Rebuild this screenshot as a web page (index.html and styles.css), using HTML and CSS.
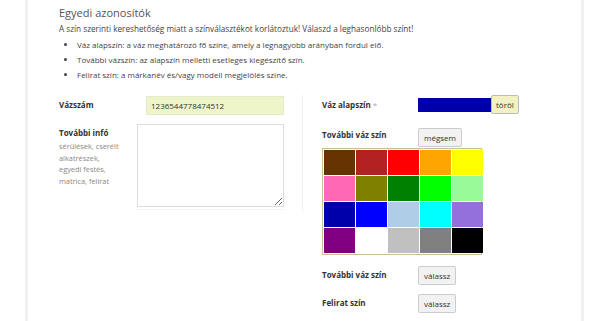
FILE: index.html
```html
<!DOCTYPE html>
<html lang="hu">
<head>
  <meta charset="UTF-8">
  <title>Egyedi azonosítók</title>
  <link rel="stylesheet" href="styles.css">
</head>
<body>
<div class="panel">
  <h2 class="title">Egyedi azonosítók</h2>
  <p class="intro">A szín szerinti kereshetőség miatt a színválasztékot korlátoztuk! Válaszd a leghasonlóbb színt!</p>
  <ul class="hints">
    <li>Váz alapszín: a váz meghatározó fő színe, amely a legnagyobb arányban fordul elő.</li>
    <li>További vázszín: az alapszín melletti esetleges kiegészítő szín.</li>
    <li>Felirat szín: a márkanév és/vagy modell megjelölés színe.</li>
  </ul>

  <div class="columns">
    <div class="col-left">
      <div class="row">
        <label class="label label-num" for="vazszam">Vázszám</label>
        <input type="text" id="vazszam" class="num-input" value="1236544778474512">
      </div>
      <div class="row">
        <div class="label-info">
          <label class="label" for="info">További infó</label>
          <span class="help">sérülések, cserélt alkatrészek, egyedi festés, matrica, felirat</span>
        </div>
        <textarea id="info" class="info-text"></textarea>
      </div>
      <div class="under-line"></div>
    </div>

    <div class="col-right">
      <div class="row">
        <span class="label">Váz alapszín <span class="req">*</span></span>
        <span class="chosen"></span>
        <button type="button" class="btn btn-del">töröl</button>
      </div>
      <div class="row row-extra">
        <span class="label">További váz szín</span>
        <button type="button" class="btn">mégsem</button>
      </div>
      <div class="palette">
        <span class="sw" style="background:#663300"></span>
        <span class="sw" style="background:#b22222"></span>
        <span class="sw" style="background:#ff0000"></span>
        <span class="sw" style="background:#ffa500"></span>
        <span class="sw" style="background:#ffff00"></span>
        <span class="sw" style="background:#ff69b4"></span>
        <span class="sw" style="background:#808000"></span>
        <span class="sw" style="background:#008000"></span>
        <span class="sw" style="background:#00ff00"></span>
        <span class="sw" style="background:#98fb98"></span>
        <span class="sw" style="background:#0000aa"></span>
        <span class="sw" style="background:#0000ff"></span>
        <span class="sw" style="background:#b0cde8"></span>
        <span class="sw" style="background:#00ffff"></span>
        <span class="sw" style="background:#9370db"></span>
        <span class="sw" style="background:#800080"></span>
        <span class="sw" style="background:#ffffff"></span>
        <span class="sw" style="background:#c0c0c0"></span>
        <span class="sw" style="background:#808080"></span>
        <span class="sw" style="background:#000000"></span>
      </div>
      <div class="row row-pick">
        <span class="label">További váz szín</span>
        <button type="button" class="btn">válassz</button>
      </div>
      <div class="row row-pick">
        <span class="label">Felirat szín</span>
        <button type="button" class="btn">válassz</button>
      </div>
    </div>
  </div>
</div>
</body>
</html>
```

FILE: styles.css
```css
body {
  font-family: "Open Sans", Arial, sans-serif;
  background-color: #fff;
  color: #444;
  margin: 0;
  padding: 0;
}

.panel {
  margin-left: 25px;
  width: 522px;
  height: 321px;
  padding-left: 31px;
  border-left: 3px solid #f0f0f0;
  border-right: 3px solid #f0f0f0;
  box-sizing: content-box;
}

.title {
  margin: 0;
  padding-top: 5px;
  font-size: 11px;
  font-weight: normal;
  color: #555;
  line-height: 16px;
}

.intro {
  margin: 1px 0 0 0;
  font-size: 8.2px;
  line-height: 13px;
  color: #444;
}

.hints {
  margin: 2px 0 0 0;
  padding-left: 18px;
  font-size: 8px;
  color: #444;
}

.hints li {
  line-height: 15px;
  padding-left: 0;
}

.columns {
  display: flex;
  margin-top: 13px;
}

.col-left {
  width: 225px;
  padding-right: 18px;
  border-right: 1px solid #eee;
  height: 116px;
}

.col-right {
  padding-left: 19px;
}

.row {
  display: flex;
  align-items: flex-start;
}

.label {
  font-size: 8px;
  font-weight: bold;
  color: #333;
}

.req {
  color: #aaa;
  font-weight: normal;
}

.label-num {
  width: 87px;
  padding-top: 4px;
}

.num-input {
  width: 138px;
  height: 19px;
  box-sizing: border-box;
  border: 1px solid #e6eacc;
  background-color: #eef5c8;
  font-family: "Open Sans", Arial, sans-serif;
  font-size: 8px;
  color: #333;
  padding: 0 4px;
  margin-top: 1px;
}

.label-info {
  width: 78px;
  padding-top: 12px;
  display: flex;
  flex-direction: column;
}

.help {
  margin-top: 3px;
  font-size: 7.4px;
  line-height: 11.5px;
  color: #888;
  width: 61px;
}

.info-text {
  width: 147px;
  height: 83px;
  box-sizing: border-box;
  margin: 9px 0 0 0;
  border: 1px solid #ddd;
  resize: both;
}

.under-line {
  margin: 2px 0 0 78px;
  width: 147px;
  border-top: 1px solid #f3f3f3;
}

.col-right .label {
  width: 96px;
}

.col-right > .row:first-child .label {
  padding-top: 4px;
}

.chosen {
  display: inline-block;
  width: 73px;
  height: 14px;
  margin-top: 3px;
  background-color: #0000aa;
}

.btn {
  font-family: "Open Sans", Arial, sans-serif;
  font-size: 8px;
  color: #333;
  background-color: #f2f2f2;
  border: 1px solid #ccc;
  border-radius: 2px;
  height: 19px;
  padding: 0 5px;
  cursor: pointer;
}

.btn-del {
  background-color: #f1f1c4;
  border-color: #bbb;
  padding: 0 4px;
}

.row-extra {
  margin-top: 9px;
  height: 20px;
  padding-top: 5px;
}

.row-extra .label {
  padding-top: 1px;
}

.palette {
  display: grid;
  grid-template-columns: repeat(5, 31px);
  grid-auto-rows: 25px;
  gap: 1px;
  width: 160px;
  padding: 1px;
  background-color: #fff;
  border: 1px solid #c8c096;
  box-sizing: border-box;
  margin-top: 0;
}

.sw {
  display: block;
}

.row-pick {
  margin-top: 11px;
  height: 19px;
}

.row-pick + .row-pick {
  margin-top: 9px;
}

.row-pick .label {
  padding-top: 3px;
}
```
